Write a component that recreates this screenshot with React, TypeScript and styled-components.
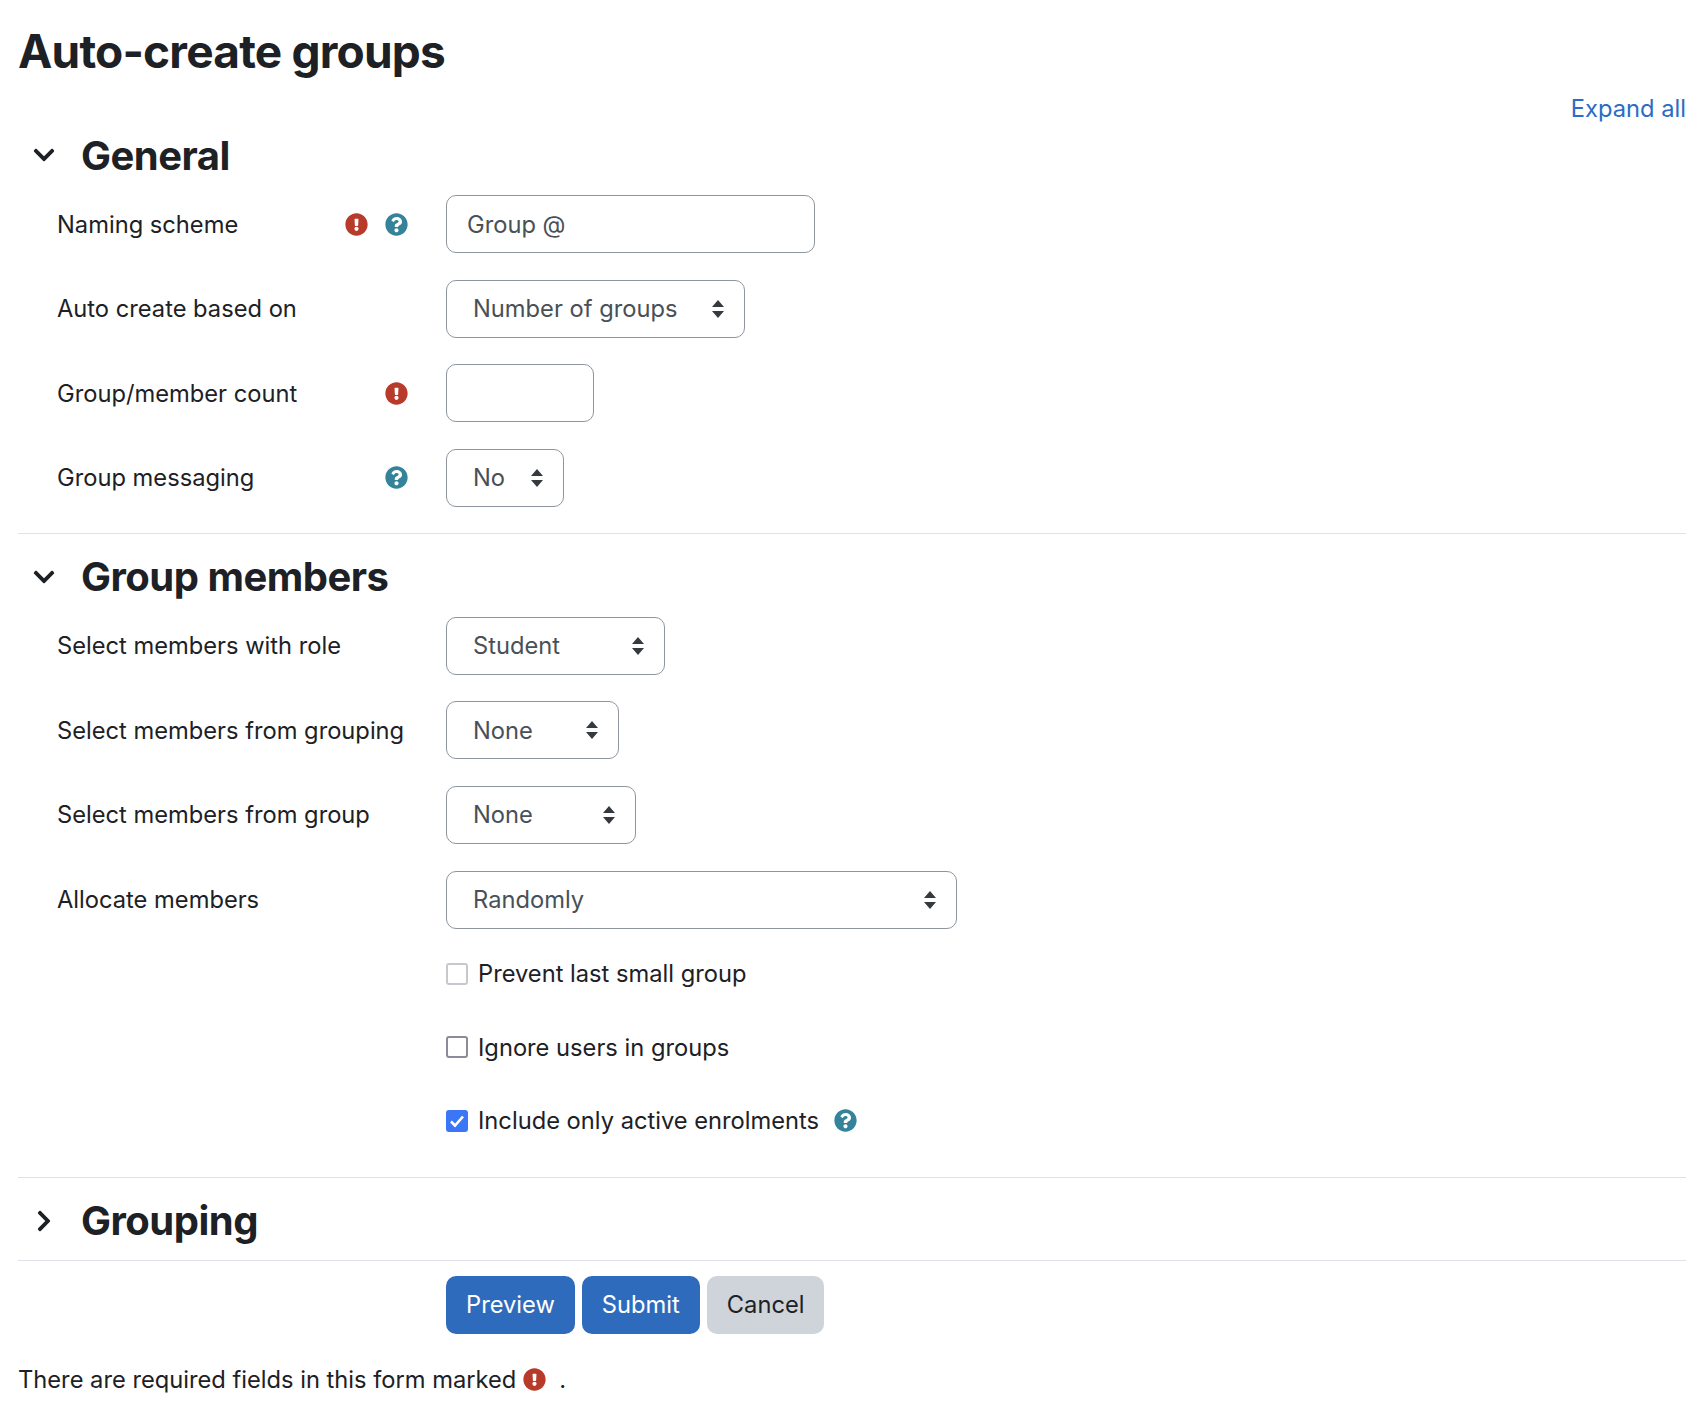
import React from 'react';
import styled, { createGlobalStyle } from 'styled-components';
import { FaChevronDown, FaChevronRight, FaExclamationCircle, FaQuestionCircle } from 'react-icons/fa';

const GlobalStyle = createGlobalStyle`
    html, body {
        margin: 0;
        background: #fff;
        color: #1d2125;
        font-family: Inter, "Liberation Sans", sans-serif;
        font-size: 23.7px;
    }
`;

const arrows = `url("data:image/svg+xml,%3Csvg xmlns='http://www.w3.org/2000/svg' width='14' height='18' viewBox='0 0 14 18'%3E%3Cpath d='M7 0l6 7H1z M7 18l-6-7h12z' fill='%23343a40'/%3E%3C/svg%3E")`;

const Page = styled.div`
    box-sizing: border-box;
    width: 1704px;
    min-height: 1416px;
    padding: 20px 18px 0;
`;

const Title = styled.h1`
    margin: 0;
    font-size: 46px;
    line-height: 62px;
    font-weight: 700;
    letter-spacing: -0.8px;
`;

const ExpandRow = styled.div`
    display: flex;
    justify-content: flex-end;
    margin-top: 12px;
`;

const ExpandLink = styled.a`
    color: #2b6cc4;
    line-height: 30px;
`;

const Section = styled.section<{ $collapsed?: boolean }>`
    border-bottom: 1px solid #dee2e6;
    padding-top: 3px;
    padding-bottom: ${props => (props.$collapsed ? '11px' : '26px')};

    & + & {
        padding-top: 15px;
    }
`;

const SectionHead = styled.div`
    display: flex;
    align-items: center;
    height: 56px;
    color: #1d2125;
`;

const Chevron = styled.span`
    display: flex;
    justify-content: center;
    width: 63px;
    padding-right: 12px;
    box-sizing: border-box;
    font-size: 24px;
`;

const SectionTitle = styled.h3`
    margin: 0;
    font-size: 40px;
    font-weight: 700;
    letter-spacing: -0.5px;
`;

const Rows = styled.div`
    display: flex;
    flex-direction: column;
    gap: 26.6px;
    margin-top: 12px;
`;

const Row = styled.div`
    display: grid;
    grid-template-columns: 428px 1fr;
    align-items: center;
    min-height: 58px;
`;

const LabelCell = styled.div`
    display: flex;
    align-items: center;
    justify-content: space-between;
    padding: 0 38px 0 39px;
`;

const Label = styled.label`
    white-space: nowrap;
`;

const IconGroup = styled.span<{ $offset?: number }>`
    display: flex;
    gap: 17px;
    margin-left: ${props => props.$offset ?? 0}px;
`;

const IconBox = styled.span<{ $color: string }>`
    display: inline-flex;
    font-size: 23px;
    color: ${props => props.$color};
`;

const TextInput = styled.input<{ $width: number }>`
    box-sizing: border-box;
    width: ${props => props.$width}px;
    height: 58px;
    padding: 0 20px;
    border: 1px solid #8f959e;
    border-radius: 10px;
    background: #fff;
    color: #495057;
    font: inherit;
`;

const Select = styled.select<{ $width: number }>`
    appearance: none;
    box-sizing: border-box;
    width: ${props => props.$width}px;
    height: 58px;
    padding: 0 46px 0 26px;
    border: 1px solid #8f959e;
    border-radius: 10px;
    background: #fff ${arrows} no-repeat right 19px center;
    color: #495057;
    font: inherit;
`;

const CheckList = styled.div`
    display: flex;
    flex-direction: column;
    gap: 43.5px;
    margin: 30px 0 15px 428px;
`;

const CheckRow = styled.div`
    display: flex;
    align-items: center;
    height: 30px;
`;

const Box = styled.span<{ $tone: 'faint' | 'plain' | 'on' }>`
    display: flex;
    align-items: center;
    justify-content: center;
    box-sizing: border-box;
    width: 22px;
    height: 22px;
    margin-right: 10px;
    border-radius: 3px;
    border: 2.5px solid ${props => (props.$tone === 'faint' ? '#c6c8ce' : props.$tone === 'plain' ? '#8a8c99' : '#3b76f6')};
    background: ${props => (props.$tone === 'on' ? '#3b76f6' : '#fff')};
`;

const Actions = styled.div`
    display: flex;
    gap: 7px;
    margin: 15px 0 0 428px;
`;

const Button = styled.button<{ $primary?: boolean }>`
    box-sizing: border-box;
    height: 58px;
    padding: 0 20px;
    border: 0;
    border-radius: 10px;
    background: ${props => (props.$primary ? '#2f6bbd' : '#ced4da')};
    color: ${props => (props.$primary ? '#fff' : '#1d2125')};
    font: inherit;
`;

const Footnote = styled.p`
    display: flex;
    align-items: center;
    margin: 29px 0 0;
    line-height: 34px;
`;

const Required = () => (
    <IconBox $color="#b73a2a"><FaExclamationCircle /></IconBox>
);

const Help = () => (
    <IconBox $color="#35829b"><FaQuestionCircle /></IconBox>
);

const App: React.FC = () => {
    return (
        <Page>
            <GlobalStyle />
            <Title>Auto-create groups</Title>
            <ExpandRow><ExpandLink>Expand all</ExpandLink></ExpandRow>

            <Section>
                <SectionHead>
                    <Chevron><FaChevronDown /></Chevron>
                    <SectionTitle>General</SectionTitle>
                </SectionHead>
                <Rows>
                    <Row>
                        <LabelCell>
                            <Label>Naming scheme</Label>
                            <IconGroup><Required /><Help /></IconGroup>
                        </LabelCell>
                        <TextInput $width={369} defaultValue="Group @" />
                    </Row>
                    <Row>
                        <LabelCell><Label>Auto create based on</Label></LabelCell>
                        <Select $width={299}><option>Number of groups</option></Select>
                    </Row>
                    <Row>
                        <LabelCell>
                            <Label>Group/member count</Label>
                            <Required />
                        </LabelCell>
                        <TextInput $width={148} />
                    </Row>
                    <Row>
                        <LabelCell>
                            <Label>Group messaging</Label>
                            <Help />
                        </LabelCell>
                        <Select $width={118}><option>No</option></Select>
                    </Row>
                </Rows>
            </Section>

            <Section>
                <SectionHead>
                    <Chevron><FaChevronDown /></Chevron>
                    <SectionTitle>Group members</SectionTitle>
                </SectionHead>
                <Rows>
                    <Row>
                        <LabelCell><Label>Select members with role</Label></LabelCell>
                        <Select $width={219}><option>Student</option></Select>
                    </Row>
                    <Row>
                        <LabelCell><Label>Select members from grouping</Label></LabelCell>
                        <Select $width={173}><option>None</option></Select>
                    </Row>
                    <Row>
                        <LabelCell><Label>Select members from group</Label></LabelCell>
                        <Select $width={190}><option>None</option></Select>
                    </Row>
                    <Row>
                        <LabelCell><Label>Allocate members</Label></LabelCell>
                        <Select $width={511}><option>Randomly</option></Select>
                    </Row>
                </Rows>
                <CheckList>
                    <CheckRow>
                        <Box $tone="faint" />
                        Prevent last small group
                    </CheckRow>
                    <CheckRow>
                        <Box $tone="plain" />
                        Ignore users in groups
                    </CheckRow>
                    <CheckRow>
                        <Box $tone="on">
                            <svg width="16" height="14" viewBox="0 0 16 14"><path d="M2 7.5l4 4 8-9" fill="none" stroke="#fff" strokeWidth="2.6" /></svg>
                        </Box>
                        Include only active enrolments
                        <IconGroup $offset={15}><Help /></IconGroup>
                    </CheckRow>
                </CheckList>
            </Section>

            <Section $collapsed>
                <SectionHead>
                    <Chevron><FaChevronRight /></Chevron>
                    <SectionTitle>Grouping</SectionTitle>
                </SectionHead>
            </Section>

            <Actions>
                <Button $primary>Preview</Button>
                <Button $primary>Submit</Button>
                <Button>Cancel</Button>
            </Actions>

            <Footnote>
                There are required fields in this form marked&nbsp;<Required />&nbsp;&nbsp;.
            </Footnote>
        </Page>
    );
};

export default App;
